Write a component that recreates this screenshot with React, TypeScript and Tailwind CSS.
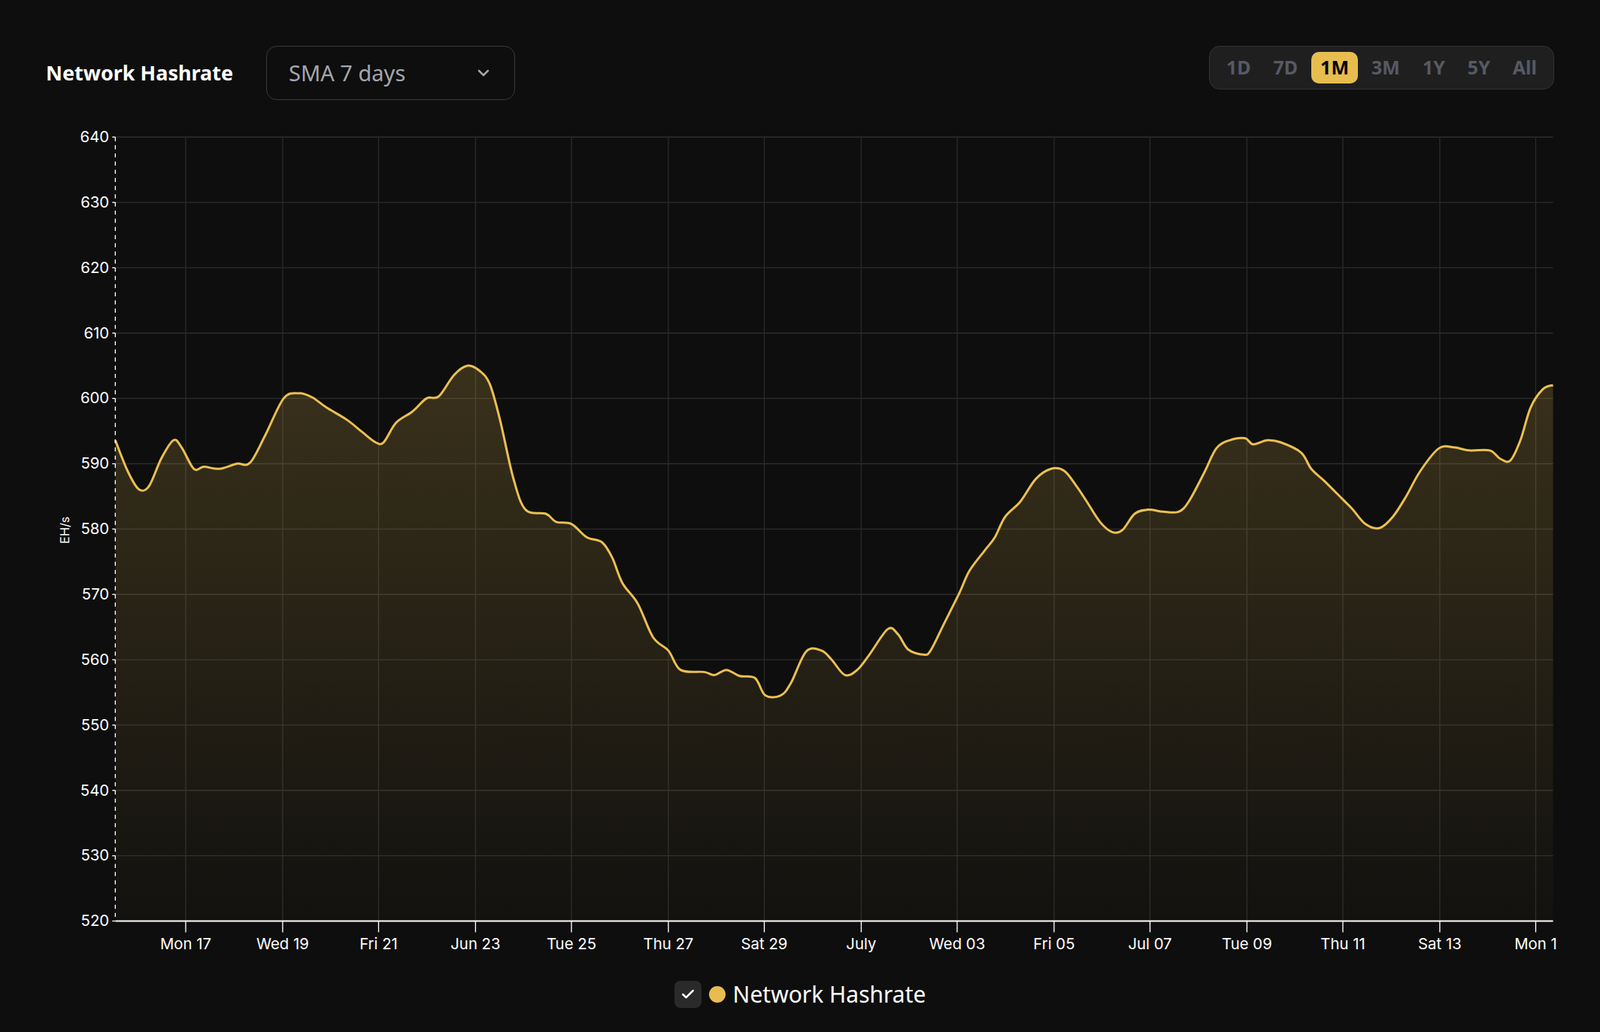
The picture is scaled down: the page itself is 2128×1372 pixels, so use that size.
import { ChevronDown, Check } from "lucide-react";

// points in 1568-wide reference space
const pts: [number, number][] = [
  [113, 430], [125, 460], [136, 478], [146, 475], [158, 448], [170, 430], [178, 437], [190, 458], [200, 456], [215, 458],
  [232, 453], [245, 452], [260, 425], [278, 389], [293, 384], [306, 388], [320, 398], [340, 410], [355, 422], [368, 432],
  [376, 432], [388, 413], [404, 402], [418, 389], [430, 387], [445, 366], [458, 357], [470, 362], [480, 375], [490, 410],
  [503, 467], [515, 498], [535, 502], [545, 510], [560, 512], [575, 525], [590, 530], [600, 545], [610, 570], [625, 590],
  [640, 623], [655, 636], [667, 655], [690, 657], [700, 660], [712, 655], [725, 661], [740, 663], [750, 680], [765, 680],
  [775, 668], [790, 637], [805, 636], [815, 645], [828, 660], [840, 655], [852, 640], [870, 615], [880, 620], [890, 635],
  [905, 640], [912, 636], [925, 610], [940, 580], [950, 558], [965, 538], [975, 525], [985, 505], [1000, 490], [1015, 468],
  [1030, 458], [1043, 460], [1055, 475], [1065, 490], [1078, 510], [1090, 520], [1100, 518], [1112, 502], [1125, 498],
  [1140, 500], [1155, 500], [1165, 490], [1180, 462], [1192, 438], [1205, 430], [1220, 428], [1228, 434], [1242, 430],
  [1255, 432], [1275, 442], [1285, 458], [1298, 470], [1315, 487], [1325, 497], [1338, 512], [1352, 516], [1365, 505],
  [1378, 485], [1392, 460], [1410, 438], [1425, 437], [1440, 440], [1460, 440], [1470, 448], [1480, 450], [1490, 430],
  [1500, 398], [1512, 380], [1522, 376],
];

function smooth(p: [number, number][]) {
  let d = `M${p[0][0]},${p[0][1]}`;
  for (let i = 0; i < p.length - 1; i++) {
    const p0 = p[i - 1] || p[i];
    const p1 = p[i];
    const p2 = p[i + 1];
    const p3 = p[i + 2] || p2;
    const c1x = p1[0] + (p2[0] - p0[0]) / 6;
    const c1y = p1[1] + (p2[1] - p0[1]) / 6;
    const c2x = p2[0] - (p3[0] - p1[0]) / 6;
    const c2y = p2[1] - (p3[1] - p1[1]) / 6;
    d += ` C${c1x},${c1y} ${c2x},${c2y} ${p2[0]},${p2[1]}`;
  }
  return d;
}

const line = smooth(pts);
const area = `${line} L1522,901 L113,901 Z`;

const yTicks = [640, 630, 620, 610, 600, 590, 580, 570, 560, 550, 540, 530, 520];
const xTicks: [number, string][] = [
  [182, "Mon 17"], [277, "Wed 19"], [371, "Fri 21"], [466, "Jun 23"], [560, "Tue 25"], [655, "Thu 27"],
  [749, "Sat 29"], [844, "July"], [938, "Wed 03"], [1033, "Fri 05"], [1127, "Jul 07"], [1222, "Tue 09"],
  [1316, "Thu 11"], [1411, "Sat 13"], [1505, "Mon 1"],
];
const periods = ["1D", "7D", "1M", "3M", "1Y", "5Y", "All"];

export default function App() {
  return (
    <div className="w-[2128px] h-[1372px] bg-[#0e0e0e] font-['Inter',sans-serif] overflow-hidden">
      <div className="flex items-start justify-between px-[61px] pt-[61px]">
        <div className="flex items-center gap-[44px]">
          <h1 className="text-[27px] font-bold text-white">Network Hashrate</h1>
          <div className="flex h-[72px] w-[331px] items-center justify-between rounded-[14px] border border-[#3a3a3a] px-[29px] text-[29px] text-[#a3a6ad]">
            <span>SMA 7 days</span>
            <ChevronDown className="h-6 w-6" strokeWidth={2.5} />
          </div>
        </div>
        <div className="flex h-[58px] items-center gap-[6px] rounded-[14px] border border-[#333] bg-[#1f1f20] px-[10px] text-[25px] font-bold text-[#565a63]">
          {periods.map((p) => (
            <span
              key={p}
              className={
                p === "1M"
                  ? "rounded-[10px] bg-[#e8bd4f] px-[12px] py-[2px] text-black"
                  : "px-[12px] py-[2px]"
              }
            >
              {p}
            </span>
          ))}
        </div>
      </div>

      <svg viewBox="0 110 1568 840" width="2128" height="1140" className="mt-[18px] block">
        <defs>
          <linearGradient id="fill" x1="0" y1="0" x2="0" y2="1">
            <stop offset="0%" stopColor="#e8bd4f" stopOpacity="0.2" />
            <stop offset="100%" stopColor="#e8bd4f" stopOpacity="0.02" />
          </linearGradient>
        </defs>
        {yTicks.map((v, i) => {
          const y = 133 + i * 64;
          return (
            <g key={v}>
              {i < yTicks.length - 1 && <line x1={113} x2={1522} y1={y} y2={y} stroke="#2c2c2c" strokeWidth={1} />}
              <line x1={110} x2={113} y1={y} y2={y} stroke="#fff" strokeWidth={1} />
              <text x={107} y={y + 5} textAnchor="end" fill="#fff" fontSize={15} fontFamily="Inter, sans-serif">
                {v}
              </text>
            </g>
          );
        })}
        {xTicks.map(([x, l]) => (
          <g key={l}>
            <line x1={x} x2={x} y1={133} y2={901} stroke="#2a2a2a" strokeWidth={1} />
            <line x1={x} x2={x} y1={901} y2={912} stroke="#fff" strokeWidth={1} />
            <text x={x} y={929} textAnchor="middle" fill="#fff" fontSize={15} fontFamily="Inter, sans-serif">
              {l}
            </text>
          </g>
        ))}
        <path d={area} fill="url(#fill)" />
        <path d={line} fill="none" stroke="#ebc052" strokeWidth={2.2} />
        <line x1={113} x2={113} y1={133} y2={901} stroke="#fff" strokeWidth={1} strokeDasharray="4 4" />
        <line x1={113} x2={1522} y1={901} y2={901} stroke="#fff" strokeWidth={1.5} />
        <text
          x={68}
          y={518}
          fill="#fff"
          fontSize={12}
          fontFamily="Inter, sans-serif"
          textAnchor="middle"
          transform="rotate(-90 68 518)"
        >
          EH/s
        </text>
      </svg>

      <div className="mt-[8px] flex items-center justify-center gap-[10px]">
        <div className="flex h-[36px] w-[36px] items-center justify-center rounded-[8px] bg-[#2a2a2b]">
          <Check className="h-5 w-5 text-white" strokeWidth={3} />
        </div>
        <span className="h-[22px] w-[22px] rounded-full bg-[#e8bd4f]" />
        <span className="text-[30px] text-white">Network Hashrate</span>
      </div>
    </div>
  );
}
